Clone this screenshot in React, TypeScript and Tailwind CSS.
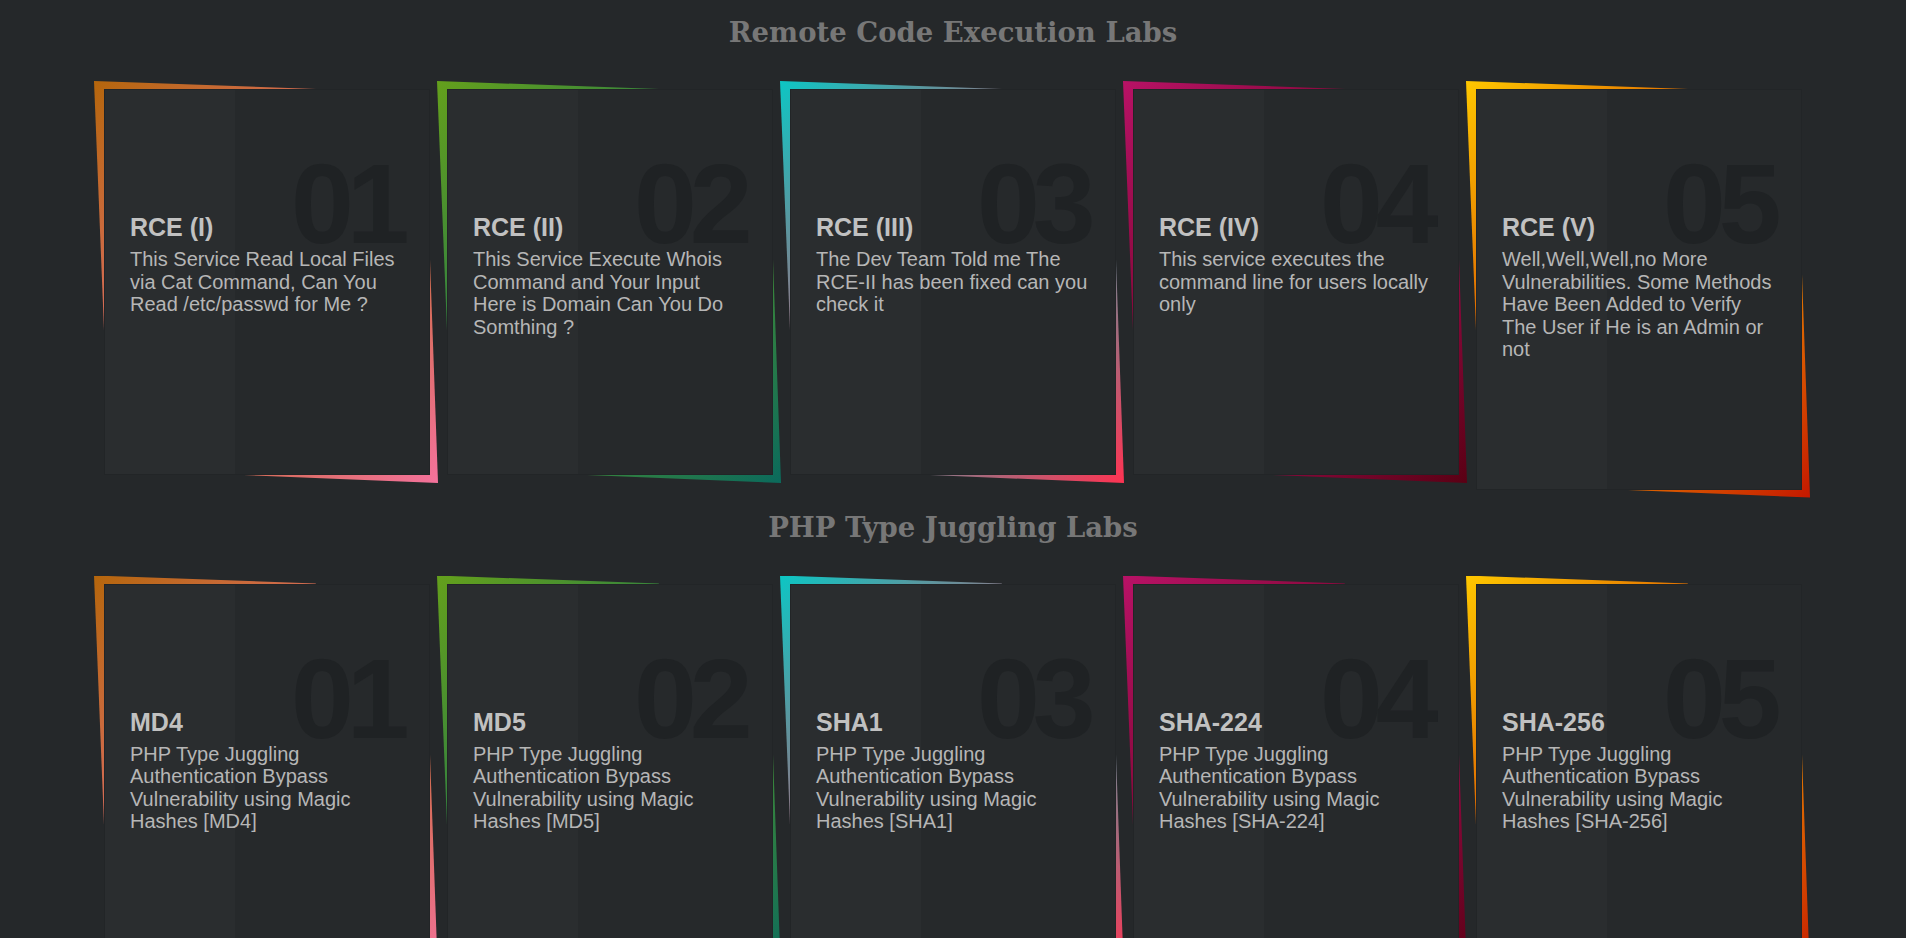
import React from "react";

type Card = { title: string; desc: string };

const themes = [
  "bg-[linear-gradient(135deg,#b5660c_0%,#f4729c_100%)]",
  "bg-[linear-gradient(135deg,#64a01c_0%,#0b6a5c_100%)]",
  "bg-[linear-gradient(135deg,#0cc6c4_0%,#ff3352_100%)]",
  "bg-[linear-gradient(135deg,#b81266_0%,#5a0014_100%)]",
  "bg-[linear-gradient(135deg,#ffc800_0%,#c41800_100%)]",
];

const rce: Card[] = [
  {
    title: "RCE (I)",
    desc: "This Service Read Local Files via Cat Command, Can You Read /etc/passwd for Me ?",
  },
  {
    title: "RCE (II)",
    desc: "This Service Execute Whois Command and Your Input Here is Domain Can You Do Somthing ?",
  },
  {
    title: "RCE (III)",
    desc: "The Dev Team Told me The RCE-II has been fixed can you check it",
  },
  {
    title: "RCE (IV)",
    desc: "This service executes the command line for users locally only",
  },
  {
    title: "RCE (V)",
    desc: "Well,Well,Well,no More Vulnerabilities. Some Methods Have Been Added to Verify The User if He is an Admin or not",
  },
];

const php: Card[] = ["MD4", "MD5", "SHA1", "SHA-224", "SHA-256"].map((h) => ({
  title: h,
  desc: `PHP Type Juggling Authentication Bypass Vulnerability using Magic Hashes [${h}]`,
}));

function LabCard({ card, index }: { card: Card; index: number }) {
  const g = themes[index];
  return (
    <div className="relative w-[326px] shrink-0">
      <div
        className={`absolute left-[-10px] top-[-8px] w-[222px] h-[249px] [clip-path:polygon(0_0,100%_8px,10px_100%)] ${g}`}
      />
      <div
        className={`absolute right-[-8px] bottom-[-8px] w-[194px] h-[223px] [clip-path:polygon(186px_0,100%_100%,0_215px)] ${g}`}
      />
      <div className="relative min-h-[386px] bg-[#26292b] border border-[#222527] overflow-hidden">
        <div className="absolute inset-y-0 left-0 w-[40%] bg-[#2a2d2f]" />
        <div className="absolute left-[186px] top-[58px] text-[113px] leading-none tracking-[-7px] font-bold text-[#1f2224] font-['Liberation_Sans',Arial,sans-serif] whitespace-nowrap">
          {String(index + 1).padStart(2, "0")}
        </div>
        <div className="relative pt-[122px] pl-[25px] pr-[24px] pb-[128px] font-['Liberation_Sans',Arial,sans-serif]">
          <h3 className="text-[25px] leading-[30px] font-bold text-[#c1c1c1]">{card.title}</h3>
          <p className="mt-[6px] text-[20px] leading-[22.5px] text-[#b6b6b6]">{card.desc}</p>
        </div>
      </div>
    </div>
  );
}

function Section({ heading, cards }: { heading: string; cards: Card[] }) {
  return (
    <section>
      <h2 className="pt-[16px] text-center font-['DejaVu_Serif',serif] font-bold text-[27.5px] leading-[33px] text-[#777777]">
        {heading}
      </h2>
      <div className="mt-[40px] flex justify-center items-start gap-[17px]">
        {cards.map((c, i) => (
          <LabCard key={c.title} card={c} index={i} />
        ))}
      </div>
    </section>
  );
}

export default function App() {
  return (
    <div className="min-h-screen bg-[#25282a] pb-[40px]">
      <Section heading="Remote Code Execution Labs" cards={rce} />
      <div className="mt-[5px]">
        <Section heading="PHP Type Juggling Labs" cards={php} />
      </div>
    </div>
  );
}
